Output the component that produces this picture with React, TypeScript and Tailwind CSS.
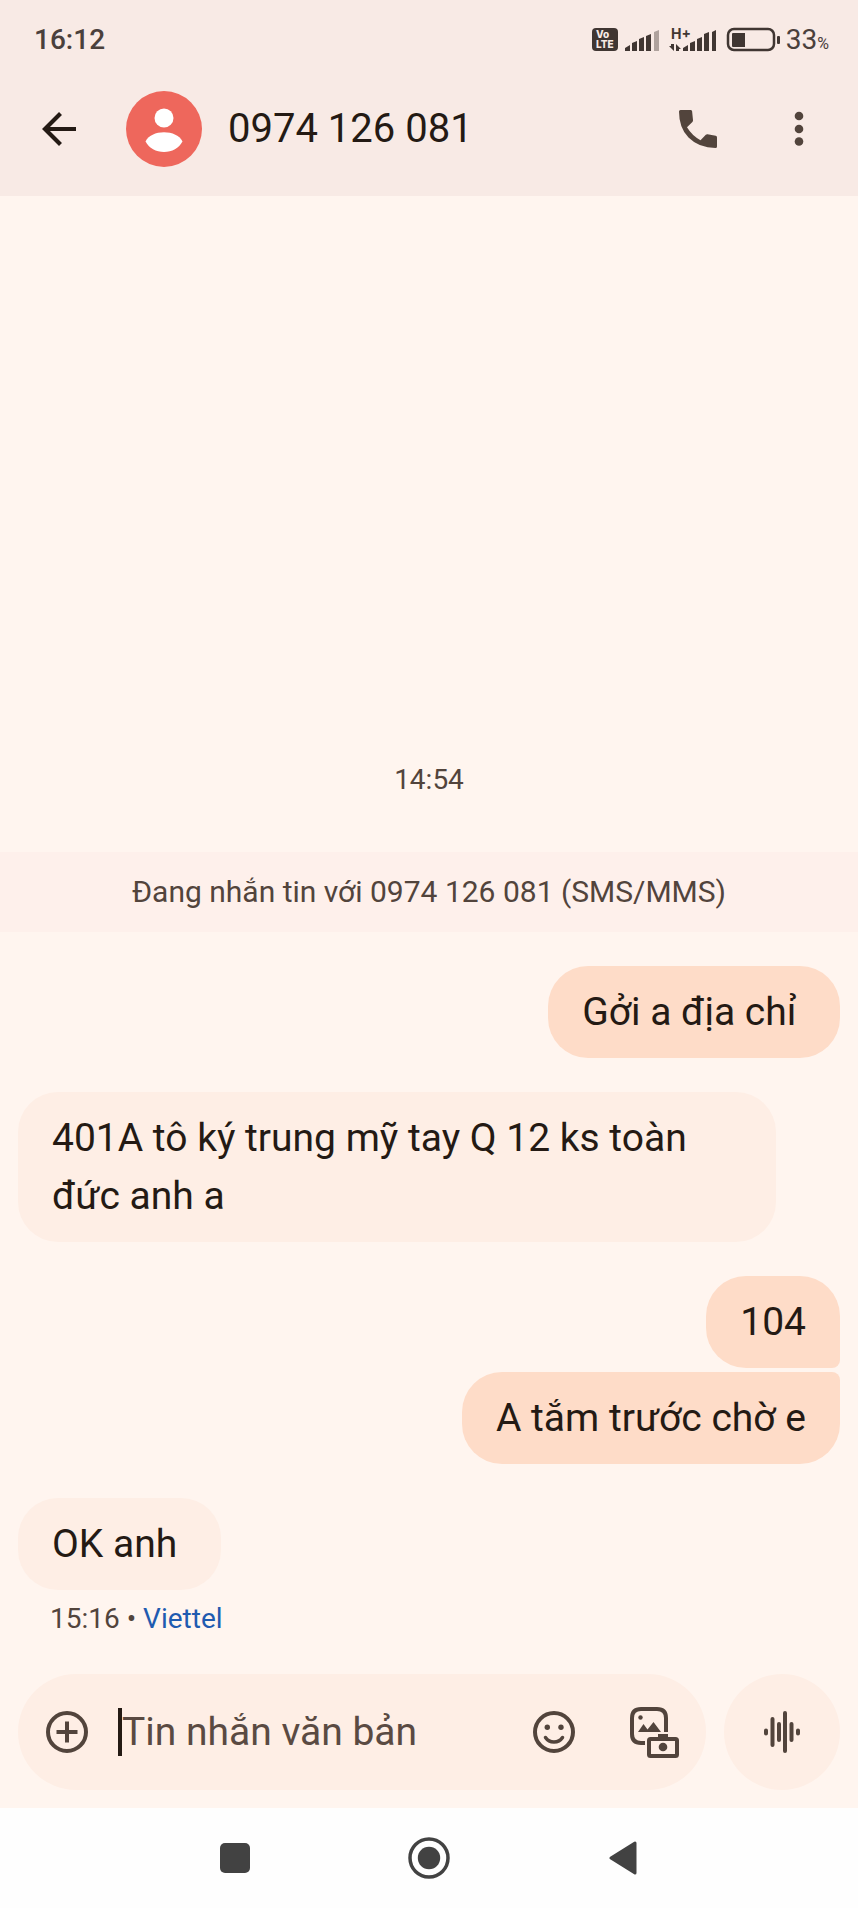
import { useState } from 'react';

type Message = {
  text: string;
  sent: boolean;
  corners: string;
  gap: string;
};

const MESSAGES: Message[] = [
  { text: 'Gởi a địa chỉ ', sent: true, corners: 'rounded-[40px]', gap: 'mt-[34px]' },
  { text: '401A tô ký trung mỹ tay Q 12 ks toàn đức anh a', sent: false, corners: 'rounded-[40px]', gap: 'mt-[34px]' },
  { text: '104', sent: true, corners: 'rounded-[40px] rounded-br-lg', gap: 'mt-[34px]' },
  { text: 'A tắm trước chờ e', sent: true, corners: 'rounded-[40px] rounded-tr-lg', gap: 'mt-1' },
  { text: 'OK anh ', sent: false, corners: 'rounded-[40px]', gap: 'mt-[34px]' },
];

function StatusIcons() {
  return (
    <svg width="190" height="32" viewBox="0 0 190 32" fill="#403632" aria-hidden="true">
      {/* VoLTE badge */}
      <rect x="0" y="4" width="26" height="23" rx="4" />
      <g fill="#f8eae5" fontFamily="Inter, sans-serif" fontWeight="800" fontSize="10">
        <text x="4" y="14">Vo</text>
        <text x="4" y="24">LTE</text>
      </g>

      {/* SIM 1 */}
      <path d="M33 27v-3l5-3v6zM40 27v-8l5-2v10zM47 27V15l5-2v14zM54 27V12l5-2v17z" />
      <path d="M62 27V8l5-2v21z" opacity="0.4" />

      {/* SIM 2 with data arrows */}
      <text x="79" y="15" fontFamily="Inter, sans-serif" fontWeight="700" fontSize="14">H+</text>
      <path d="M79 20h3v7l-5-5h2zM84 27v-7l5 5h-2v2zM91 27v-3l5-3v6zM98 27v-8l5-2v10zM105 27V15l5-2v14zM112 27V10l5-2v19zM120 27V8l4-2v21z" />

      {/* Battery */}
      <rect x="136" y="5" width="46" height="21" rx="6" fill="none" stroke="#403632" strokeWidth="2.5" />
      <path d="M141 9h12v14h-12q-1 0-1-1V10q0-1 1-1z" />
      <rect x="185" y="12" width="3" height="8" rx="1" />
    </svg>
  );
}

function StatusBar() {
  return (
    <div className="flex h-20 items-center justify-between pl-[34px] pr-[29px] text-[28px] leading-8 font-medium text-[#4a403c]">
      <span>16:12</span>
      <div className="flex items-center gap-1">
        <StatusIcons />
        <span className="font-normal">
          33<span className="text-base">%</span>
        </span>
      </div>
    </div>
  );
}

function Header() {
  return (
    <header className="bg-[#f8eae5] pb-[18px]">
      <StatusBar />
      <div className="flex h-[98px] items-center pl-[42px] pr-[54px]">
        <button type="button" aria-label="Quay lại" className="mr-[50px]">
          <svg width="34" height="34" viewBox="0 0 34 34" fill="none" stroke="#241a14" strokeWidth="4.2">
            <path d="M34 17H4M18.500 1.500L3 17l15.500 15.500" />
          </svg>
        </button>
        <svg width="76" height="76" viewBox="0 0 76 76" className="mr-[26px] shrink-0" aria-hidden="true">
          <circle cx="38" cy="38" r="38" fill="#ee675c" />
          <circle cx="38" cy="27" r="9.500" fill="#fff" />
          <path d="M19.500 50.500C22 44.500 30 41.200 38 41.200s16 3.300 18.500 9.300C53 57 46 61 38 61s-15-4-18.500-10.500z" fill="#fff" />
        </svg>
        <h1 className="flex-1 whitespace-nowrap text-[40px] leading-[60px] text-[#241a14]">0974 126 081</h1>
        <div className="flex items-center gap-[77px]">
          <button type="button" aria-label="Gọi">
            <svg width="38" height="38" viewBox="0 0 38 38" fill="#52443c">
              <path d="M1.500 0h10q1.300 0 1.600 1.300L14 10q.2 1-.6 1.900L8 17.200Q13 25.500 21.500 30.200l5.300-5.400q.8-.8 1.800-.6l8.100 1.600q1.300.3 1.300 1.600v9.100q0 1.500-1.500 1.500Q20 38 9.500 27.500 0 18 0 1.500 0 0 1.500 0z" />
            </svg>
          </button>
          <button type="button" aria-label="Tùy chọn khác">
            <svg width="10" height="36" viewBox="0 0 10 36" fill="#52443c">
              <circle cx="5" cy="5" r="4.300" />
              <circle cx="5" cy="18" r="4.300" />
              <circle cx="5" cy="30.500" r="4.300" />
            </svg>
          </button>
        </div>
      </div>
    </header>
  );
}

function Bubble({ text, sent, corners, gap }: Message) {
  return (
    <p
      className={`max-w-[758px] whitespace-pre-wrap px-[34px] py-[17px] text-[39px] leading-[58px] text-[#241a14] ${corners} ${gap} ${
        sent ? 'self-end bg-[#fedcc8]' : 'self-start bg-[#feeee5]'
      }`}
    >
      {text}
    </p>
  );
}

function Conversation() {
  return (
    <main className="flex flex-1 flex-col justify-end pb-[37px]">
      <time className="text-center text-[28px] leading-9 text-[#52443c]">14:54</time>
      <p className="mt-[54px] bg-[#fef0eb] py-[22px] text-center text-[30px] leading-9 text-[#52443c]">
        Đang nhắn tin với 0974 126 081 (SMS/MMS)
      </p>
      <div className="flex flex-col px-[18px]">
        {MESSAGES.map((message) => (
          <Bubble key={message.text} {...message} />
        ))}
        <p className="mt-[11px] pl-8 text-[28px] leading-9 text-[#52443c]">
          15:16 • <a href="#sim" className="text-[#1f5bb0]">Viettel</a>
        </p>
      </div>
    </main>
  );
}

function Composer() {
  const [draft, setDraft] = useState('');

  return (
    <form className="flex gap-[18px] px-[18px] pb-[18px]" onSubmit={(e) => e.preventDefault()}>
      <div className="flex h-[116px] min-w-0 flex-1 items-center rounded-full bg-[#feeee5] pl-7 pr-[27px]">
        <button type="button" aria-label="Thêm" className="mr-[30px] shrink-0">
          <svg width="42" height="42" viewBox="0 0 42 42" fill="none" stroke="#52443c" strokeWidth="4">
            <circle cx="21" cy="21" r="19" />
            <path d="M21 10.500v21M10.500 21h21" />
          </svg>
        </button>
        <span className="h-12 w-1 shrink-0 bg-[#241a14]" />
        <input
          type="text"
          aria-label="Tin nhắn văn bản"
          placeholder="Tin nhắn văn bản"
          value={draft}
          onChange={(e) => setDraft(e.target.value)}
          className="min-w-0 flex-1 bg-transparent text-[39px] leading-[58px] text-[#241a14] outline-none placeholder:text-[#5a4a42]"
        />
        <button type="button" aria-label="Biểu tượng cảm xúc" className="mr-[55px] shrink-0">
          <svg width="42" height="42" viewBox="0 0 42 42" fill="none" stroke="#52443c" strokeWidth="4">
            <circle cx="21" cy="21" r="19" />
            <path d="M12.500 26.500q3 4.500 8.500 4.500t8.500-4.500" strokeWidth="3.500" strokeLinecap="round" />
            <circle cx="14.300" cy="16.300" r="2.700" fill="#52443c" stroke="none" />
            <circle cx="28" cy="16.300" r="2.700" fill="#52443c" stroke="none" />
          </svg>
        </button>
        <button type="button" aria-label="Ảnh và máy ảnh" className="shrink-0">
          <svg width="49" height="51" viewBox="0 0 49 51" fill="none" stroke="#52443c" strokeWidth="4">
            <path d="M15 36h-4q-9 0-9-9V11q0-9 9-9h16q9 0 9 9v14" />
            <rect x="19" y="32" width="28" height="17" rx="1.500" />
            <g fill="#52443c" stroke="none">
              <path d="M8 25l5.500-8 4 5.500L23.500 15 31 25zM28 27h10v5H28z" />
              <circle cx="10.500" cy="10.500" r="2.200" />
              <circle cx="33" cy="40" r="4.300" />
            </g>
          </svg>
        </button>
      </div>
      <button type="button" aria-label="Ghi âm" className="flex size-[116px] shrink-0 items-center justify-center rounded-full bg-[#feeee5]">
        <svg width="36" height="42" viewBox="0 0 36 42" fill="none" stroke="#52443c" strokeWidth="4" strokeLinecap="round">
          <path d="M2 19.500v3M8.500 8v26M15 13v16M21 2v38M27.500 13v16M34 19.500v3" />
        </svg>
      </button>
    </form>
  );
}

function NavigationBar() {
  return (
    <nav className="bg-[#fefefe]">
      <div className="mx-auto grid h-[100px] w-[68%] grid-cols-3 place-items-center">
        <button type="button" aria-label="Gần đây">
          <span className="block size-[30px] rounded-[5px] bg-[#424242]" />
        </button>
        <button type="button" aria-label="Màn hình chính">
          <svg width="42" height="42" viewBox="0 0 42 42" fill="none" stroke="#424242" strokeWidth="3.500">
            <circle cx="21" cy="21" r="19" />
            <circle cx="21" cy="21" r="11.200" fill="#424242" stroke="none" />
          </svg>
        </button>
        <button type="button" aria-label="Trở về">
          <svg width="28" height="34" viewBox="0 0 28 34" fill="#424242" stroke="#424242" strokeWidth="3" strokeLinejoin="round">
            <path d="M26 2v30L2 17z" />
          </svg>
        </button>
      </div>
    </nav>
  );
}

export default function App() {
  return (
    <div className="flex min-h-screen flex-col bg-[#fff5ef] font-[Roboto,sans-serif]">
      <Header />
      <Conversation />
      <Composer />
      <NavigationBar />
    </div>
  );
}
